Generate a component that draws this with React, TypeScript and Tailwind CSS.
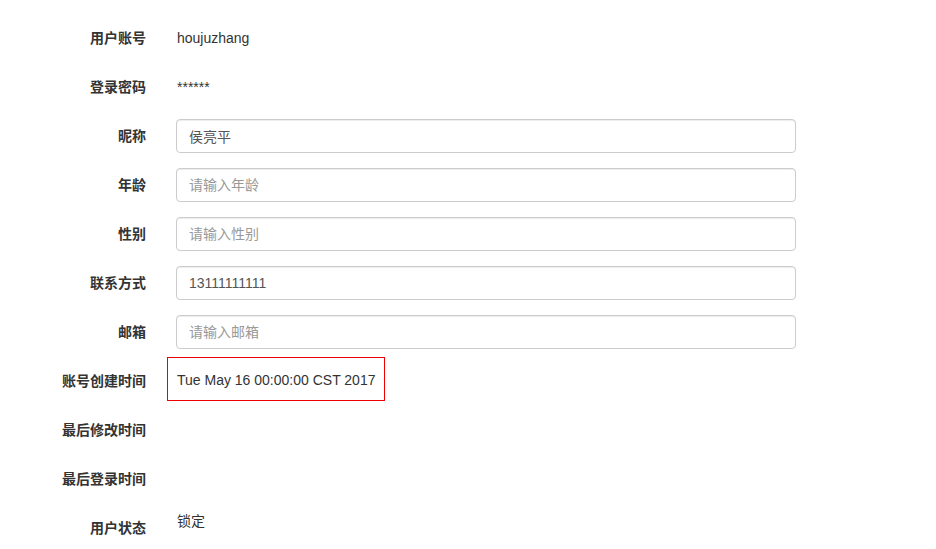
import React from 'react';

type Field =
  | { label: string; kind: 'static'; value: string; flush?: boolean }
  | { label: string; kind: 'input'; value?: string; placeholder?: string }
  | { label: string; kind: 'marked'; value: string }
  | { label: string; kind: 'empty' };

const fields: Field[] = [
  { label: '用户账号', kind: 'static', value: 'houjuzhang' },
  { label: '登录密码', kind: 'static', value: '******' },
  { label: '昵称', kind: 'input', value: '侯亮平' },
  { label: '年龄', kind: 'input', placeholder: '请输入年龄' },
  { label: '性别', kind: 'input', placeholder: '请输入性别' },
  { label: '联系方式', kind: 'input', value: '13111111111' },
  { label: '邮箱', kind: 'input', placeholder: '请输入邮箱' },
  { label: '账号创建时间', kind: 'marked', value: 'Tue May 16 00:00:00 CST 2017' },
  { label: '最后修改时间', kind: 'empty' },
  { label: '最后登录时间', kind: 'empty' },
  { label: '用户状态', kind: 'static', value: '锁定', flush: true },
];

const FieldControl: React.FC<{ field: Field }> = ({ field }) => {
  if (field.kind === 'input') {
    return (
      <input
        type="text"
        defaultValue={field.value}
        placeholder={field.placeholder}
        className="h-[34px] w-[620px] rounded-[4px] border border-[#ccc] px-3 py-[6px] text-[14px] leading-5 text-[#555] shadow-[inset_0_1px_1px_rgba(0,0,0,0.075)] outline-none placeholder:text-[#999]"
      />
    );
  }
  if (field.kind === 'marked') {
    return (
      <div className="-ml-[9px] -mt-[7px] -mb-[3px] border border-[#e00] pb-[10px] pl-[9px] pr-[9px] pt-[12px] leading-5 text-[#333]">
        {field.value}
      </div>
    );
  }
  if (field.kind === 'static') {
    return <p className={`${field.flush ? '' : 'pt-[7px]'} pl-px leading-5 text-[#333]`}>{field.value}</p>;
  }
  return <div />;
};

export default function App() {
  return (
    <div
      className="min-h-[549px] bg-white pt-[21px] text-[14px] text-[#333]"
      style={{ fontFamily: '"Liberation Sans", "Noto Sans CJK SC", sans-serif' }}
    >
      <form className="flex flex-col gap-[15px]" onSubmit={(e) => e.preventDefault()}>
        {fields.map((field) => (
          <div key={field.label} className="flex min-h-[34px] items-start">
            <label className="w-[146px] shrink-0 pt-[7px] text-right font-bold leading-5">{field.label}</label>
            <div className="ml-[30px]">
              <FieldControl field={field} />
            </div>
          </div>
        ))}
      </form>
    </div>
  );
}
